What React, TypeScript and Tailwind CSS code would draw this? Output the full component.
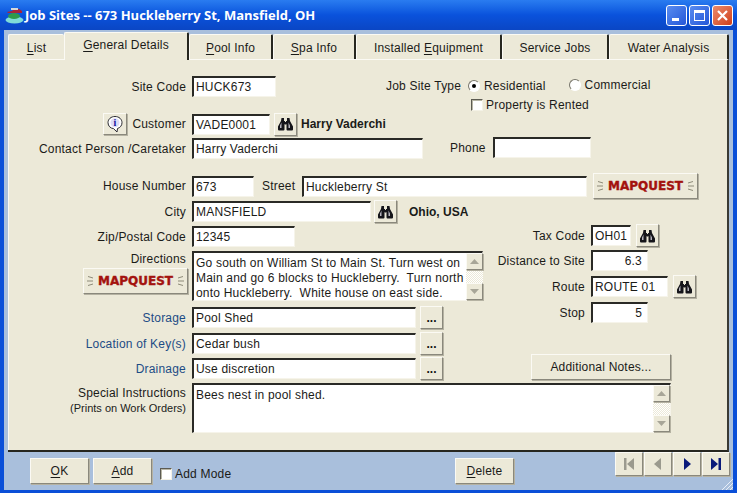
import React from "react";

const raised = "bg-[#ece9d8] border border-t-[#fbfaf4] border-l-[#fbfaf4] border-r-[#8a887c] border-b-[#8a887c] shadow-[1px_1px_0_#b5b2a2]";
const sunken = "bg-white border-t-2 border-l-2 border-r border-b border-t-[#2a2a26] border-l-[#2a2a26] border-r-[#f6f4ea] border-b-[#f6f4ea]";

function Label({ w = "w-[178px]", blue, children }: { w?: string; blue?: boolean; children: React.ReactNode }) {
  return <div className={`${w} shrink-0 text-right whitespace-nowrap ${blue ? "text-[#1d4c85]" : ""}`}>{children}</div>;
}
function Field({ w, h = "h-[21px]", right, children }: { w: string; h?: string; right?: boolean; children?: React.ReactNode }) {
  return (
    <div className={`${w} ${h} ${sunken} shrink-0 flex items-center px-[2px] whitespace-nowrap overflow-hidden ${right ? "justify-end pr-[5px]" : ""}`}>
      {children}
    </div>
  );
}
function Binoc({ className = "" }: { className?: string }) {
  return (
    <button className={`w-[23px] h-[23px] shrink-0 flex items-center justify-center ${raised} ${className}`}>
      <svg width="15" height="14" viewBox="0 0 15 14">
        <path d="M3.500 1h2.500v3h1v3H6.500v5.500a1 1 0 0 1-1 1H1a1 1 0 0 1-1-1V9.500L3 4z" fill="#15151a" />
        <path d="M11.500 1H9v3H8v3h.5v5.500a1 1 0 0 0 1 1H14a1 1 0 0 0 1-1V9.500L12 4z" fill="#15151a" />
        <rect x="6.500" y="5" width="2" height="2.500" fill="#15151a" />
        <path d="M2 8.500L3.500 5.500V11H2zM10.500 5.500V11h1.500V8.500z" fill="#b8b6c0" />
      </svg>
    </button>
  );
}
function Dots() {
  return (
    <button className={`w-[23px] h-[23px] -ml-[2px] shrink-0 flex items-end justify-center pb-[4px] font-bold tracking-[0] text-[#111] ${raised}`}>
      ...
    </button>
  );
}
function MapQuest({ className = "" }: { className?: string }) {
  const dashes = (flip: boolean) => (
    <svg width="8" height="14" viewBox="0 0 8 14" className={flip ? "-scale-x-100" : ""}>
      <path d="M2 2.500l5 1.500M1 7h6M2 11.500l5-1.500" stroke="#8d8a78" strokeWidth="1" />
    </svg>
  );
  return (
    <button className={`w-[105px] h-[26px] shrink-0 flex items-center justify-between px-[2px] ${raised} ${className}`}>
      {dashes(false)}
      <span className="font-['DejaVu_Sans'] font-bold text-[12px] tracking-[0] text-[#a3120e] [-webkit-text-stroke:0.4px_#a3120e] leading-none">MAPQUEST</span>
      {dashes(true)}
    </button>
  );
}
function Scrollbar() {
  return (
    <div className="w-[17px] self-stretch flex flex-col justify-between shrink-0 bg-[repeating-conic-gradient(#ece9d8_0_25%,#ffffff_0_50%)] bg-[length:2px_2px]">
      <div className={`h-[17px] flex items-center justify-center ${raised}`}>
        <svg width="9" height="5"><path d="M4.500 0L9 5H0z" fill="#a8a698" /></svg>
      </div>
      <div className={`h-[17px] flex items-center justify-center ${raised}`}>
        <svg width="9" height="5"><path d="M0 0H9L4.500 5z" fill="#a8a698" /></svg>
      </div>
    </div>
  );
}
function Tab({ w, active, noRight, children }: { w: string; active?: boolean; noRight?: boolean; children: React.ReactNode }) {
  return (
    <div
      className={`${w} shrink-0 flex items-center justify-center bg-[#ece9d8] border-t border-l border-t-[#fbfaf4] border-l-[#fbfaf4] ${
        active ? "h-[28px] -mb-px relative z-10 pb-[3px]" : "h-[25px] pt-[2px]"
      } ${noRight ? "" : "border-r-2 border-r-[#26261f]"} rounded-t-[2px]`}
    >
      <span className="whitespace-pre">{children}</span>
    </div>
  );
}
function Radio({ on }: { on?: boolean }) {
  return (
    <span className="w-[12px] h-[12px] rounded-full shrink-0 border border-t-[#77756a] border-l-[#77756a] border-r-[#fff] border-b-[#fff] bg-white flex items-center justify-center">
      {on && <span className="w-[4px] h-[4px] rounded-full bg-black" />}
    </span>
  );
}
function Check() {
  return <span className="w-[12px] h-[12px] shrink-0 bg-white border border-t-[#5c5b52] border-l-[#5c5b52] border-r-[#f4f2e6] border-b-[#f4f2e6] shadow-[inset_1px_1px_0_#b8b6a6]" />;
}
function U({ children }: { children: React.ReactNode }) {
  return <span className="underline underline-offset-2">{children}</span>;
}
function Nav({ kind, on }: { kind: "first" | "prev" | "next" | "last"; on?: boolean }) {
  const c = on ? "#0a1a7a" : "#9b9a8e";
  return (
    <button className={`w-[28px] h-[24px] flex items-center justify-center ${raised}`}>
      <svg width="14" height="14" viewBox="0 0 14 14" fill={c}>
        {kind === "first" && <><rect x="2" y="1" width="2.500" height="12" /><path d="M12 1v12L5 7z" /></>}
        {kind === "prev" && <path d="M10 1v12L3 7z" />}
        {kind === "next" && <path d="M4 1v12l7-6z" />}
        {kind === "last" && <><rect x="9.500" y="1" width="2.500" height="12" /><path d="M2 1v12l7-6z" /></>}
      </svg>
    </button>
  );
}
function BarBtn({ children, className = "" }: { children: React.ReactNode; className?: string }) {
  return <button className={`w-[59px] h-[26px] flex items-center justify-center ${raised} ${className}`}>{children}</button>;
}

export default function App() {
  return (
    <div className="w-[737px] h-[493px] overflow-hidden flex flex-col bg-[#0a4fd8] font-['Liberation_Sans',Arial,sans-serif] text-[12px] tracking-[0.2px] text-[#1b1b18] leading-none">
      {/* Title bar */}
      <div className="h-[30px] shrink-0 flex items-center bg-gradient-to-b from-[#2a7cf0] via-[#0a52dc] to-[#0a46c4] pl-[5px] pr-[4px]">
        <svg width="19" height="18" viewBox="0 0 19 18" className="shrink-0">
          <ellipse cx="9.500" cy="14" rx="9" ry="3.500" fill="#7fdcd8" />
          <ellipse cx="9" cy="10" rx="6" ry="3" fill="#2f9a4a" />
          <path d="M2 6l5-1 2-2 5 0 3 2v2H3z" fill="#a8243a" />
          <rect x="6" y="2" width="7" height="2" fill="#d8d8d8" />
        </svg>
        <span className="ml-[1px] font-['Open_Sans'] font-bold text-[13px] tracking-[0] text-white whitespace-nowrap">Job Sites -- 673 Huckleberry St, Mansfield, OH</span>
        <div className="ml-auto flex gap-[2px]">
          <div className="w-[21px] h-[21px] rounded-[3px] border border-white bg-gradient-to-br from-[#5a8cf0] to-[#2456d8] flex items-end pl-[5px] pb-[4px]">
            <div className="w-[7px] h-[3px] bg-white" />
          </div>
          <div className="w-[21px] h-[21px] rounded-[3px] border border-white bg-gradient-to-br from-[#5a8cf0] to-[#2456d8] flex items-center justify-center">
            <div className="w-[11px] h-[11px] border border-white border-t-[3px]" />
          </div>
          <div className="w-[21px] h-[21px] rounded-[3px] border border-white bg-gradient-to-br from-[#ea8a6a] to-[#d03c14] flex items-center justify-center">
            <svg width="13" height="13" viewBox="0 0 13 13"><path d="M2 2l9 9M11 2l-9 9" stroke="#fff" strokeWidth="2.200" /></svg>
          </div>
        </div>
      </div>

      {/* Client area */}
      <div className="flex-1 min-h-0 mx-[4px] mb-[3px] bg-[#a9bfdc] flex flex-col px-[4px]">
        {/* Tabs */}
        <div className="h-[28px] mt-px shrink-0 flex items-end bg-[#a9bfdc]">
          <Tab w="w-[56px]" noRight><U>L</U>ist</Tab>
          <Tab w="w-[125px]" active><U>G</U>eneral Details</Tab>
          <Tab w="w-[84px]"><U>P</U>ool Info</Tab>
          <Tab w="w-[83px]"><U>S</U>pa Info</Tab>
          <Tab w="w-[146px]">Installed <U>E</U>quipment</Tab>
          <Tab w="w-[107px]">Service Jobs</Tab>
          <Tab w="w-[120px]">Water Analysis</Tab>
        </div>

        {/* Panel */}
        <div className="h-[393px] shrink-0 bg-[#ece9d8] border-t border-t-[#fbfaf4] border-r-2 border-r-[#3a3a34] border-b-2 border-b-[#26261f] shadow-[inset_1px_0_0_#fbfaf4] flex flex-col pt-[16px]">
          <div className="flex">
            <div className="w-[378px] shrink-0">
              <div className="flex items-center gap-[6px]"><Label>Site Code</Label><Field w="w-[84px]">HUCK673</Field></div>
              <div className="flex items-center h-[22px] mt-[16px]">
                <button className={`ml-[95px] w-[24px] h-[22px] flex items-center justify-center ${raised}`}>
                  <svg width="18" height="18" viewBox="0 0 18 18">
                    <path d="M9 1.500c4 0 7 2.600 7 6.200 0 3-2 5-4.500 5.800l-.5 3.500-3.500-3.400C4.500 13.400 2 11 2 7.700 2 4.100 5 1.500 9 1.500z" fill="#fff" stroke="#2a2a30" strokeWidth="1" />
                    <circle cx="9" cy="7.700" r="4.500" fill="#dcdcf6" />
                    <text x="9" y="11" textAnchor="middle" fontFamily="Liberation Serif" fontWeight="bold" fontSize="10" fill="#14149c">i</text>
                  </svg>
                </button>
                <div className="w-[59px] shrink-0 text-right">Customer</div>
                <Field w="w-[78px] ml-[6px]">VADE0001</Field>
                <Binoc className="ml-[4px]" />
                <span className="ml-[4px] font-bold tracking-[0] whitespace-nowrap">Harry Vaderchi</span>
              </div>
            </div>
            <div className="pt-[3px]">
              <div className="flex items-center h-[14px] whitespace-nowrap">
                <span className="w-[73px]">Job Site Type</span>
                <span className="ml-[9px]"><Radio on /></span>
                <span className="ml-[4px]">Residential</span>
                <span className="ml-[23px] -mt-[2px]"><Radio /></span>
                <span className="ml-[4px] -mt-[2px]">Commercial</span>
              </div>
              <div className="flex items-center mt-[5px] ml-[85px] h-[14px] whitespace-nowrap">
                <Check /><span className="ml-[3px]">Property is Rented</span>
              </div>
            </div>
          </div>

          <div className="flex items-center h-[21px] mt-[3px]">
            <div className="flex items-center gap-[6px]"><Label>Contact Person /Caretaker</Label><Field w="w-[231px]">Harry Vaderchi</Field></div>
            <div className="ml-[27px] -mt-[2px]">Phone</div>
            <Field w="w-[98px] ml-[7px] -mt-[2px]" />
          </div>

          <div className="flex items-center h-[26px] mt-[14px]">
            <div className="flex items-center gap-[6px]"><Label>House Number</Label><Field w="w-[62px]">673</Field></div>
            <div className="ml-[8px] w-[34px]">Street</div>
            <Field w="w-[285px] ml-[6px]">Huckleberry St</Field>
            <MapQuest className="ml-[6px]" />
          </div>

          <div className="flex items-center h-[23px] mt-px">
            <div className="flex items-center gap-[6px]"><Label>City</Label><Field w="w-[179px]">MANSFIELD</Field></div>
            <Binoc className="ml-[3px]" />
            <span className="ml-[12px] font-bold tracking-[0]">Ohio, USA</span>
          </div>

          <div className="flex mt-[2px]">
            <div className="w-[482px] shrink-0">
              <div className="flex items-center gap-[6px] mt-px"><Label>Zip/Postal Code</Label><Field w="w-[103px]">12345</Field></div>
              <div className="flex gap-0 mt-[4px]">
                <div className="w-[184px] shrink-0 flex flex-col items-end pr-[4px]">
                  <div className="pr-[2px] mt-[2px] h-[15px]">Directions</div>
                  <MapQuest />
                </div>
                <div className={`w-[291px] h-[50px] ${sunken} flex`}>
                  <div className="flex-1 px-[2px] pt-[3px] leading-[15px] whitespace-nowrap">
                    Go south on William St to Main St. Turn west on<br />
                    Main and go 6 blocks to Huckleberry.&nbsp; Turn north<br />
                    onto Huckleberry.&nbsp; White house on east side.
                  </div>
                  <Scrollbar />
                </div>
              </div>
              <div className="flex items-center gap-[6px] h-[23px] mt-[5px]">
                <Label blue>Storage</Label><Field w="w-[224px]">Pool Shed</Field><Dots />
              </div>
            </div>
            <div className="-mt-px">
              <div className="flex items-center h-[23px]"><Label w="w-[95px]">Tax Code</Label><Field w="w-[40px] ml-[6px]">OH01</Field><Binoc className="ml-[5px]" /></div>
              <div className="flex items-center h-[21px] mt-[3px]"><Label w="w-[95px]">Distance to Site</Label><Field w="w-[57px] ml-[6px]" right>6.3</Field></div>
              <div className="flex items-center h-[23px] mt-[4px]"><Label w="w-[95px]">Route</Label><Field w="w-[77px] ml-[6px]">ROUTE 01</Field><Binoc className="ml-[5px]" /></div>
              <div className="flex items-center h-[21px] mt-[4px]"><Label w="w-[95px]">Stop</Label><Field w="w-[57px] ml-[6px]" right>5</Field></div>
            </div>
          </div>

          <div className="flex mt-[3px]">
            <div>
              <div className="flex items-center gap-[6px] h-[23px]"><Label blue>Location of Key(s)</Label><Field w="w-[224px]">Cedar bush</Field><Dots /></div>
              <div className="flex items-center gap-[6px] h-[23px] mt-[2px]"><Label blue>Drainage</Label><Field w="w-[224px]">Use discretion</Field><Dots /></div>
            </div>
            <button className={`ml-[88px] self-end w-[140px] h-[26px] flex items-center justify-center ${raised}`}>Additional Notes...</button>
          </div>

          <div className="flex gap-[6px] mt-[3px]">
            <div className="w-[178px] shrink-0 text-right pt-[4px]">
              <div>Special Instructions</div>
              <div className="mt-[4px] text-[11px] tracking-[0]">(Prints on Work Orders)</div>
            </div>
            <div className={`w-[479px] h-[50px] ${sunken} flex`}>
              <div className="flex-1 px-[2px] pt-[3px] leading-[15px]">Bees nest in pool shed.</div>
              <Scrollbar />
            </div>
          </div>
        </div>

        {/* Bottom bar */}
        <div className="flex-1 min-h-0 flex relative">
          <BarBtn className="ml-[22px] mt-[6px]"><span><U>O</U>K</span></BarBtn>
          <BarBtn className="ml-[4px] mt-[6px]"><span><U>A</U>dd</span></BarBtn>
          <div className="ml-[8px] mt-[16px] flex items-center h-[12px] w-[72px] shrink-0 whitespace-nowrap"><Check /><span className="ml-[3px]">Add Mode</span></div>
          <BarBtn className="ml-[223px] mt-[6px]"><span><U>D</U>elete</span></BarBtn>
          <div className="ml-auto flex gap-px items-start -mr-px">
            <Nav kind="first" /><Nav kind="prev" /><Nav kind="next" on /><Nav kind="last" on />
          </div>
          <svg width="12" height="12" viewBox="0 0 12 12" className="absolute right-[-4px] bottom-0">
            <path d="M12 1L1 12M12 5L5 12M12 9L9 12" stroke="#e8eef8" strokeWidth="1" />
          </svg>
        </div>
      </div>
    </div>
  );
}
